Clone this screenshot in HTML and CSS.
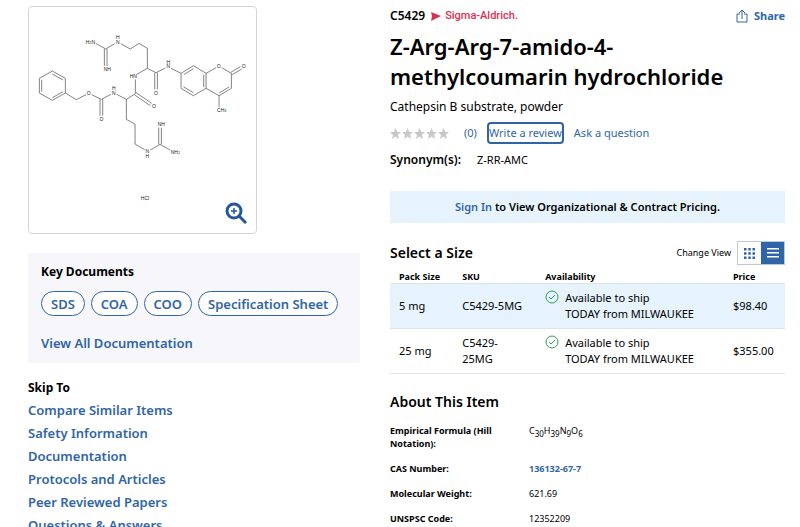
FILE: index.html
```html
<!DOCTYPE html>
<html lang="en">
	<head>
		<meta charset="utf-8">
		<meta name="viewport" content="width=device-width, initial-scale=1">
		<title>Z-Arg-Arg-7-amido-4-methylcoumarin hydrochloride</title>
		<link rel="stylesheet" href="styles.css">
	</head>
	<body>
		<main class="product">
			<div class="side">
				<div class="imageBox">
					<svg class="molecule" viewBox="27 21 681 678" role="img" aria-label="Structure of Z-Arg-Arg-7-amido-4-methylcoumarin hydrochloride">
						<g class="bonds">
							<!-- upper guanidine chain -->
							<path d="M227 130L257 147M253 147V198M261 147V198M257 147L284 131M302 131L331 147L357 130L382 145V205L350 223"/>
							<path d="M382 205L408 218L436 204M404 218V268M412 218V268M453 205L483 220"/>
							<!-- coumarin -->
							<path d="M483 220L520 197L558 220V265L520 287L483 265ZM491 224L520 206M551 224V261M520 278L490 260"/>
							<path d="M558 220L588 203M605 203L634 220V265L597 287L558 265M627 261L597 279M632 217L661 200M636 224L665 207M597 287V322"/>
							<!-- benzyl carbamate -->
							<path d="M58 235L97 213L136 235V279L97 301L58 279ZM65 239V275M97 222L129 240M129 275L97 293"/>
							<path d="M136 279L169 299L198 284M215 284L244 298L273 283M240 298V347M248 298V347M290 283L319 298L346 281V238M344 285L391 317M348 278L395 310"/>
							<!-- lower guanidine chain -->
							<path d="M319 298V358L345 372V432L374 449M391 450L420 433L450 450M416 433V383M424 433V383"/>
						</g>
						<g class="atoms">
							<text x="211" y="131">H<tspan class="small">2</tspan>N</text>
							<text x="293" y="118">H</text>
							<text x="293" y="132">N</text>
							<text x="262" y="212">NH</text>
							<text x="340" y="234">HN</text>
							<text x="402" y="325">O</text>
							<text x="408" y="284">O</text>
							<text x="445" y="191">H</text>
							<text x="445" y="205">N</text>
							<text x="596" y="203">O</text>
							<text x="671" y="204">O</text>
							<text x="605" y="337">CH<tspan class="small">3</tspan></text>
							<text x="206" y="285">O</text>
							<text x="281" y="271">H</text>
							<text x="281" y="285">N</text>
							<text x="244" y="364">O</text>
							<text x="424" y="379">NH</text>
							<text x="382" y="460">N</text>
							<text x="382" y="474">H</text>
							<text x="466" y="461">NH<tspan class="small">2</tspan></text>
							<text x="375" y="601">HCl</text>
						</g>
					</svg>
					<button class="btnZoom" type="button" aria-label="Zoom image">
						<svg viewBox="0 0 22 22" width="22" height="22">
							<circle cx="9" cy="9" r="7"/>
							<path d="M14 14L21 21"/>
							<path class="plus" d="M9 6V12M6 9H12"/>
						</svg>
					</button>
				</div>

				<section class="keyDocs">
					<h2 class="sideTitle">Key Documents</h2>
					<div class="pills">
						<button class="pill" type="button">SDS</button>
						<button class="pill" type="button">COA</button>
						<button class="pill" type="button">COO</button>
						<button class="pill" type="button">Specification Sheet</button>
					</div>
					<a class="sideLink" href="#">View All Documentation</a>
				</section>

				<nav class="skipTo">
					<h2 class="sideTitle">Skip To</h2>
					<a class="sideLink" href="#">Compare Similar Items</a>
					<a class="sideLink" href="#">Safety Information</a>
					<a class="sideLink" href="#">Documentation</a>
					<a class="sideLink" href="#">Protocols and Articles</a>
					<a class="sideLink" href="#">Peer Reviewed Papers</a>
					<a class="sideLink" href="#">Questions &amp; Answers</a>
				</nav>
			</div>

			<div class="details">
				<div class="topLine">
					<span class="productNumber">C5429</span>
					<span class="brand">
						<svg viewBox="0 0 10 9" width="10" height="9"><path d="M0 0L10 4L0 9L1 4Z"/></svg>
						<span>Sigma-Aldrich.</span>
					</span>
					<button class="btnShare" type="button">
						<svg viewBox="0 0 12 14" width="12" height="14"><path d="M4 5H1V13H11V5H8M6 10V1M3 4L6 1L9 4"/></svg>
						Share
					</button>
				</div>
				<h1 class="name">Z-Arg-Arg-7-amido-4-methylcoumarin hydrochloride</h1>
				<p class="description">Cathepsin B substrate, powder</p>

				<div class="reviews">
					<svg class="stars" viewBox="0 0 59 11" width="59" height="11" role="img" aria-label="0 out of 5 stars">
						<defs><path id="star" d="M5.500 0L7.200 4H11L8 6.700L9.100 11L5.500 8.600L1.900 11L3 6.700L0 4H3.800Z"/></defs>
						<use href="#star" x="0"/>
						<use href="#star" x="12"/>
						<use href="#star" x="24"/>
						<use href="#star" x="36"/>
						<use href="#star" x="48"/>
					</svg>
					<a class="count" href="#">(0)</a>
					<button class="btnReview" type="button">Write a review</button>
					<button class="btnAsk" type="button">Ask a question</button>
				</div>

				<div class="synonyms">
					<span class="synonymLabel">Synonym(s):</span>
					<span>Z-RR-AMC</span>
				</div>

				<div class="signIn"><a href="#">Sign In</a> to View Organizational &amp; Contract Pricing.</div>

				<div class="sizeHeader">
					<h2 class="sectionTitle">Select a Size</h2>
					<span class="changeView">Change View</span>
					<div class="viewToggle">
						<button class="btnView" type="button" aria-label="Grid view">
							<svg viewBox="0 0 11 11" width="11" height="11"><path d="M0 0h2.500v2.500H0zM4.250 0h2.500v2.500h-2.500zM8.500 0H11v2.500H8.500zM0 4.250h2.500v2.500H0zM4.250 4.250h2.500v2.500h-2.500zM8.500 4.250H11v2.500H8.500zM0 8.500h2.500V11H0zM4.250 8.500h2.500V11h-2.500zM8.500 8.500H11V11H8.500z"/></svg>
						</button>
						<button class="btnView selected" type="button" aria-label="List view">
							<svg viewBox="0 0 12 10" width="12" height="10"><path d="M0 0h12v1.500H0zM0 4h12v1.500H0zM0 8h12v1.500H0z"/></svg>
						</button>
					</div>
				</div>

				<table class="sizes">
					<colgroup>
						<col class="colPack">
						<col class="colSku">
						<col>
						<col class="colPrice">
					</colgroup>
					<thead>
						<tr><th>Pack Size</th><th>SKU</th><th>Availability</th><th>Price</th></tr>
					</thead>
					<tbody>
						<tr class="selected">
							<td>5 mg</td>
							<td>C5429-5MG</td>
							<td>
								<div class="stock">
									<svg viewBox="0 0 14 14" width="14" height="14"><circle cx="7" cy="7" r="6"/><path d="M4 7L6 9L10 5"/></svg>
									<span>Available to ship<br>TODAY from MILWAUKEE</span>
								</div>
							</td>
							<td>$98.40</td>
						</tr>
						<tr>
							<td>25 mg</td>
							<td>C5429-25MG</td>
							<td>
								<div class="stock">
									<svg viewBox="0 0 14 14" width="14" height="14"><circle cx="7" cy="7" r="6"/><path d="M4 7L6 9L10 5"/></svg>
									<span>Available to ship<br>TODAY from MILWAUKEE</span>
								</div>
							</td>
							<td>$355.00</td>
						</tr>
					</tbody>
				</table>

				<h2 class="sectionTitle">About This Item</h2>
				<dl class="about">
					<dt>Empirical Formula (Hill Notation):</dt>
					<dd>C<sub>30</sub>H<sub>39</sub>N<sub>9</sub>O<sub>6</sub></dd>
					<dt>CAS Number:</dt>
					<dd><a href="#">136132-67-7</a></dd>
					<dt>Molecular Weight:</dt>
					<dd>621.69</dd>
					<dt>UNSPSC Code:</dt>
					<dd>12352209</dd>
				</dl>
			</div>
		</main>
	</body>
</html>
```

FILE: styles.css
```css
*{
	box-sizing:border-box;
}

body{
	margin:0;
	background:#fff;
	color:#000;
	font-family:"Noto Sans", "Liberation Sans", sans-serif;
	font-size:11px;
	line-height:16px;
}

h1, h2, p, dl, dd{
	margin:0;
}

a{
	color:#2f65a7;
	text-decoration:none;
}

button{
	margin:0;
	padding:0;
	border:0;
	background:none;
	color:#2f65a7;
	font:inherit;
	cursor:pointer;
}

svg{
	display:block;
	flex:none;
}

.product{
	display:grid;
	grid-template-columns:332fr 395fr;
	gap:30px;
	padding:6px 15px 0 28px;
}

/* left column */
.imageBox{
	position:relative;
	width:69%;
	border:1px solid #d4d4d8;
	border-radius:4px;
}

.molecule{
	width:100%;
	height:auto;
}

.bonds{
	fill:none;
	stroke:#444;
	stroke-width:2;
}

.atoms{
	fill:#222;
	font-family:"Liberation Sans", Arial, sans-serif;
	font-size:15px;
	text-anchor:middle;
}

.small{
	font-size:11px;
}

.btnZoom{
	position:absolute;
	right:9px;
	bottom:9px;
}

.btnZoom svg{
	fill:none;
	stroke:#24579b;
	stroke-width:3;
}

.btnZoom .plus{
	stroke-width:1.5;
}

.keyDocs{
	margin-top:19px;
	padding:10px 13px;
	background:#f6f6fb;
}

.sideTitle{
	font-size:12px;
	font-weight:700;
	line-height:18px;
}

.sideLink{
	display:block;
	font-size:13px;
	font-weight:600;
	line-height:20px;
}

.pills{
	display:flex;
	flex-wrap:wrap;
	gap:6px;
	margin:10px 0 17px;
}

.pill{
	height:25px;
	padding:0 9px;
	border:1px solid #2f65a7;
	border-radius:13px;
	background:#fff;
	font-size:13px;
	font-weight:600;
	line-height:20px;
}

.skipTo{
	display:flex;
	flex-direction:column;
	gap:3px;
	margin-top:16px;
}

/* right column */
.topLine{
	display:flex;
	align-items:center;
	height:20px;
}

.productNumber{
	font-size:12px;
	font-weight:600;
}

.brand{
	display:flex;
	align-items:center;
	gap:4px;
	margin-left:6px;
	color:#d9304f;
	font-family:Roboto, sans-serif;
	font-weight:500;
}

.brand svg{
	fill:#d9304f;
}

.btnShare{
	display:flex;
	align-items:center;
	gap:6px;
	margin-left:auto;
	font-weight:700;
}

.btnShare svg{
	fill:none;
	stroke:#2f65a7;
}

.name{
	margin-top:5px;
	font-size:22px;
	font-weight:600;
	line-height:30px;
}

.description{
	margin-top:7px;
	font-size:12px;
	line-height:18px;
}

.reviews{
	display:flex;
	align-items:center;
	height:22px;
	margin-top:6px;
}

.stars{
	fill:#c8c8c8;
}

.count{
	margin-left:15px;
}

.btnReview{
	height:18px;
	margin:0 12px;
	border-radius:2px;
	outline:2px solid #2f65a7;
}

.synonyms{
	display:flex;
	align-items:center;
	gap:16px;
	margin-top:8px;
}

.synonymLabel{
	font-size:12px;
	font-weight:600;
}

.signIn{
	margin-top:23px;
	padding:8px;
	background:#e6f3fc;
	font-weight:600;
	text-align:center;
}

.sizeHeader{
	display:flex;
	align-items:center;
	gap:6px;
	margin-top:18px;
}

.sectionTitle{
	font-size:14px;
	font-weight:600;
	line-height:20px;
}

.changeView{
	margin-left:auto;
	font-size:9px;
}

.viewToggle{
	display:flex;
	height:24px;
	border:1px solid #b9cbe0;
}

.btnView{
	display:flex;
	align-items:center;
	justify-content:center;
	width:23px;
}

.btnView svg{
	fill:#2f65a7;
}

.btnView.selected{
	background:#2f65a7;
}

.btnView.selected svg{
	fill:#fff;
}

.sizes{
	width:100%;
	margin:5px 0 18px;
	border-collapse:collapse;
	table-layout:fixed;
}

.colPack{
	width:16%;
}

.colSku{
	width:21%;
}

.colPrice{
	width:61px;
}

.sizes th{
	padding:0 0 0 9px;
	font-size:9px;
	font-weight:700;
	line-height:13px;
	text-align:left;
}

.sizes td{
	padding:6px 9px;
	border-top:1px solid #dde4e8;
	border-bottom:1px solid #dde4e8;
}

.sizes td:nth-child(3), .sizes td:last-child{
	padding-right:0;
}

.sizes .selected{
	background:#e6f3fc;
}

.stock{
	display:flex;
	gap:6px;
}

.stock svg{
	fill:none;
	stroke:#2f9e57;
}

/* item facts */
.about{
	display:grid;
	grid-template-columns:127px 1fr;
	gap:12px;
	margin-top:12px;
	font-size:9px;
	line-height:13px;
}

.about dt, .about a{
	font-weight:700;
}

.about sub{
	font-size:8px;
	line-height:0;
}
```
